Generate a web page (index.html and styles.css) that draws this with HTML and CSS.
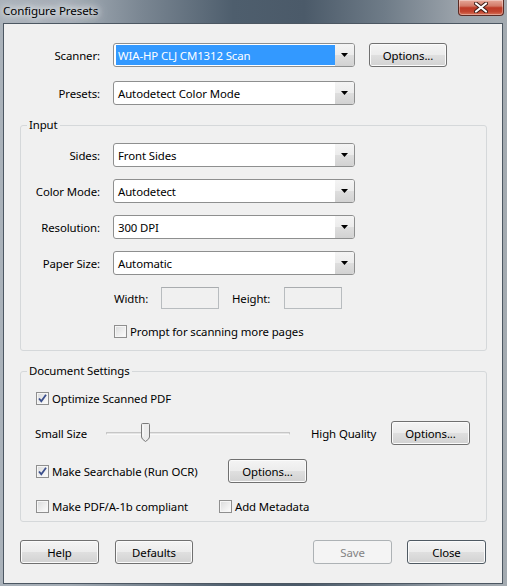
FILE: index.html
```html
<!DOCTYPE html>
<html>
<head>
<meta charset="utf-8">
<title>Configure Presets</title>
<link rel="stylesheet" href="styles.css">
</head>
<body>
<div class="window">
  <div class="titlebar">
    <span class="title">Configure Presets</span>
    <span class="close-btn"><svg width="14" height="11" viewBox="0 0 14 11"><path d="M2 1.5 L12 9.5 M12 1.5 L2 9.5" stroke="#3a1a14" stroke-width="4" stroke-linecap="round"/><path d="M2 1.5 L12 9.5 M12 1.5 L2 9.5" stroke="#ffffff" stroke-width="2.2" stroke-linecap="round"/></svg></span>
  </div>
  <div class="client">
    <div class="top">
      <div class="row">
        <span class="lbl">Scanner:</span>
        <div class="combo selected"><span class="val"><span class="hl">WIA-HP CLJ CM1312 Scan</span></span><span class="arrow"><svg width="7" height="4" viewBox="0 0 7 4"><path d="M0 0H7L3.5 4Z" fill="#000"/></svg></span></div>
        <button class="btn btn-scan-opt">Options...</button>
      </div>
      <div class="row">
        <span class="lbl">Presets:</span>
        <div class="combo"><span class="val">Autodetect Color Mode</span><span class="arrow"><svg width="7" height="4" viewBox="0 0 7 4"><path d="M0 0H7L3.5 4Z" fill="#000"/></svg></span></div>
      </div>
    </div>

    <fieldset class="group group-input">
      <legend>Input</legend>
      <div class="row">
        <span class="lbl">Sides:</span>
        <div class="combo"><span class="val">Front Sides</span><span class="arrow"><svg width="7" height="4" viewBox="0 0 7 4"><path d="M0 0H7L3.5 4Z" fill="#000"/></svg></span></div>
      </div>
      <div class="row">
        <span class="lbl">Color Mode:</span>
        <div class="combo"><span class="val">Autodetect</span><span class="arrow"><svg width="7" height="4" viewBox="0 0 7 4"><path d="M0 0H7L3.5 4Z" fill="#000"/></svg></span></div>
      </div>
      <div class="row">
        <span class="lbl">Resolution:</span>
        <div class="combo"><span class="val">300 DPI</span><span class="arrow"><svg width="7" height="4" viewBox="0 0 7 4"><path d="M0 0H7L3.5 4Z" fill="#000"/></svg></span></div>
      </div>
      <div class="row">
        <span class="lbl">Paper Size:</span>
        <div class="combo"><span class="val">Automatic</span><span class="arrow"><svg width="7" height="4" viewBox="0 0 7 4"><path d="M0 0H7L3.5 4Z" fill="#000"/></svg></span></div>
      </div>
      <div class="row row-size">
        <span class="size-lbl size-w">Width:</span>
        <span class="textbox"></span>
        <span class="size-lbl size-h">Height:</span>
        <span class="textbox"></span>
      </div>
      <div class="row row-check row-prompt">
        <span class="cb"></span><span>Prompt for scanning more pages</span>
      </div>
    </fieldset>

    <fieldset class="group group-doc">
      <legend>Document Settings</legend>
      <div class="row row-check">
        <span class="cb checked"><svg width="11" height="11" viewBox="0 0 11 11"><path d="M2 5.5 L4.3 8.2 L9 1.8" fill="none" stroke="#3b4f8c" stroke-width="1.8"/></svg></span><span>Optimize Scanned PDF</span>
      </div>
      <div class="row">
        <span class="ss-lbl">Small Size</span>
        <span class="slider"><span class="track"></span><span class="thumb"><svg width="9" height="19" viewBox="0 0 9 19"><path d="M1.5 0.5 H7.5 Q8.5 0.5 8.5 1.5 V14 Q8.5 16 4.5 18.5 Q0.5 16 0.5 14 V1.5 Q0.5 0.5 1.5 0.5Z" fill="#ececec" stroke="#7a7a7a"/><path d="M2 2 V13.5" stroke="#fff" stroke-width="1"/></svg></span></span>
        <span class="hq-lbl">High Quality</span>
        <button class="btn btn-opt">Options...</button>
      </div>
      <div class="row">
        <span class="check-item ocr"><span class="cb checked"><svg width="11" height="11" viewBox="0 0 11 11"><path d="M2 5.5 L4.3 8.2 L9 1.8" fill="none" stroke="#3b4f8c" stroke-width="1.8"/></svg></span><span>Make Searchable (Run OCR)</span></span>
        <button class="btn btn-opt">Options...</button>
      </div>
      <div class="row row-check">
        <span class="check-item pdfa"><span class="cb"></span><span>Make PDF/A-1b compliant</span></span>
        <span class="check-item"><span class="cb"></span><span>Add Metadata</span></span>
      </div>
    </fieldset>

    <div class="buttons">
      <button class="btn btn-help">Help</button>
      <button class="btn btn-defaults">Defaults</button>
      <span class="spacer"></span>
      <button class="btn btn-save" disabled>Save</button>
      <button class="btn btn-close">Close</button>
    </div>
  </div>
</div>
</body>
</html>
```

FILE: styles.css
```css
* { box-sizing: border-box; }
html, body { margin: 0; padding: 0; }
body {
  width: 507px;
  height: 586px;
  overflow: hidden;
  font-family: "Noto Sans", "Open Sans", sans-serif;
  font-size: 11.4px;
  letter-spacing: -0.1px;
  color: #000;
}
.window {
  width: 507px;
  height: 586px;
  display: flex;
  flex-direction: column;
  background: linear-gradient(90deg, #aab2ba 0%, #a3acb5 14%, #7a8692 28%, #4e5e6d 46%, #4b5a69 60%, #6f7c88 76%, #9aa2aa 90%, #a4abb1 100%);
}
.titlebar {
  height: 23px;
  display: flex;
  justify-content: space-between;
  align-items: flex-start;
  padding-left: 3px;
  flex: none;
}
.title {
  font-size: 11.6px;
  line-height: 21px;
  color: #000;
  text-shadow: 0 0 6px #fff, 0 0 10px #fff, 0 0 16px #e4e8eb;
}
.close-btn {
  width: 46px;
  height: 16px;
  margin-right: 3px;
  border: 1px solid #5b2b24;
  border-top: none;
  border-radius: 0 0 4px 4px;
  background: linear-gradient(#e6a898 0%, #d27a68 40%, #bd3a26 52%, #c24530 78%, #d8765c 100%);
  box-shadow: inset 0 0 0 1px rgba(255,255,255,0.35);
  display: flex;
  align-items: center;
  justify-content: center;
}
.client {
  flex: 1;
  margin: 0 4px 2px 3px;
  border: 1px solid #4c5762;
  background: #f0f0f0;
  display: flex;
  flex-direction: column;
}
.top {
  padding-top: 19px;
  display: flex;
  flex-direction: column;
  gap: 14px;
}
.row {
  display: flex;
  align-items: center;
  height: 24px;
  white-space: nowrap;
}
.lbl {
  width: 96px;
  text-align: right;
  margin-right: 13px;
  flex: none;
}
.group .lbl { width: 79px; }
.combo {
  width: 242px;
  height: 24px;
  flex: none;
  border: 1px solid #8e8f8f;
  border-radius: 3px;
  background: #fff;
  display: flex;
  padding: 1px;
}
.combo .val {
  flex: 1;
  display: flex;
  align-items: center;
  padding-left: 3px;
}
.combo.selected .val { padding-left: 1px; }
.combo .hl {
  flex: 1;
  align-self: stretch;
  display: flex;
  align-items: center;
  background: #3399ff;
  color: #fff;
  padding-left: 2px;
}
.combo .arrow {
  width: 19px;
  margin: -1px -1px -1px 0;
  border-radius: 0 2px 2px 0;
  background: linear-gradient(#f4f4f4 0%, #ececec 50%, #dedede 52%, #d2d2d2 100%);
  display: flex;
  align-items: center;
  justify-content: center;
}
.btn {
  height: 24px;
  flex: none;
  border: 1px solid #707070;
  border-radius: 3px;
  background: linear-gradient(#f4f4f4 0%, #ececec 48%, #dfdfdf 52%, #d2d2d2 100%);
  box-shadow: inset 0 0 0 1px #fbfbfb;
  font: inherit;
  letter-spacing: inherit;
  color: #000;
  padding: 0;
}
.btn-scan-opt { width: 78px; margin-left: 14px; }
.group {
  margin: 12px 15px 0 16px;
  padding: 10px 0 9px 0;
  border: 1px solid #d5d8da;
  border-radius: 3px;
  min-width: 0;
  display: flex;
  flex-direction: column;
}
.group legend {
  margin-left: 6px;
  padding: 0 2px;
  line-height: 16px;
}
.group-input .row { margin-bottom: 12px; }
.group-input .row:last-child { margin-bottom: 0; }
.row-size { height: 22px; padding-left: 93px; }
.size-lbl { flex: none; }
.size-w { width: 47px; }
.size-h { width: 52px; margin-left: 13px; }
.textbox {
  width: 58px;
  height: 22px;
  flex: none;
  border: 1px solid #b8bcbf;
  border-top-color: #a9acaf;
  background: #f0f0f0;
}
.row-check { height: 20px; }
.row-prompt { padding-left: 93px; }
.cb {
  width: 13px;
  height: 13px;
  flex: none;
  margin-right: 3px;
  border: 1px solid #8f8f8f;
  background: linear-gradient(135deg, #d9dadb 0%, #f0f0f0 60%, #fdfdfd 100%);
  box-shadow: inset 0 0 0 1px #f6f6f6;
  display: flex;
  align-items: center;
  justify-content: center;
}
.group-doc { padding: 9px 0 5px 0; }
.group-doc .row { margin-bottom: 13px; padding-left: 15px; }
.group-doc .row:nth-child(3) { margin-bottom: 14px; }
.group-doc .row:last-child { margin-bottom: 0; }
.ss-lbl { width: 71px; flex: none; margin-left: -1px; }
.slider {
  position: relative;
  width: 184px;
  height: 24px;
  flex: none;
  display: flex;
  align-items: center;
}
.track {
  width: 100%;
  height: 3px;
  border: 1px solid #c6c6c6;
  border-bottom-color: #f9f9f9;
  background: #e4e4e4;
  border-radius: 1px;
}
.thumb {
  position: absolute;
  left: 35px;
  top: 2px;
  width: 9px;
  height: 19px;
  display: flex;
}
.hq-lbl { width: 80px; margin-left: 21px; flex: none; }
.btn-opt { width: 79px; }
.check-item { display: flex; align-items: center; flex: none; }
.check-item.ocr { width: 192px; }
.check-item.pdfa { width: 183px; }
.buttons {
  display: flex;
  margin-top: 18px;
  padding: 0 16px;
}
.btn-help { width: 79px; }
.btn-defaults { width: 78px; margin-left: 16px; }
.spacer { flex: 1; }
.btn-save {
  width: 79px;
  border-color: #adb2b5;
  background: #f4f4f4;
  box-shadow: none;
  color: #838383;
}
.btn-close { width: 79px; margin-left: 15px; border-color: #4f5a63; }
```
